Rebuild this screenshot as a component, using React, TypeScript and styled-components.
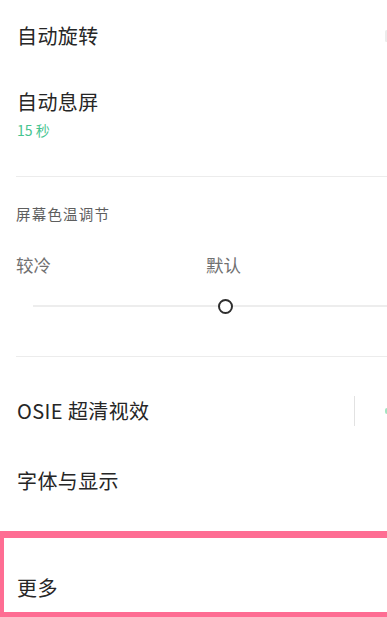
import React from "react";
import styled, { createGlobalStyle } from "styled-components";

const Global = createGlobalStyle`
  html, body { margin: 0; padding: 0; background: #ffffff; overflow: hidden; }
  body { font-family: "Noto Sans CJK SC", "Noto Sans", sans-serif; -webkit-font-smoothing: antialiased; }
  * { box-sizing: border-box; }
`;

const Page = styled.div`
  width: 387px;
  height: 617px;
  display: flex;
  flex-direction: column;
  background: #fff;
  overflow: hidden;
`;

const Row = styled.div<{ $h: number }>`
  height: ${(p) => p.$h}px;
  display: flex;
  align-items: center;
  justify-content: space-between;
  padding-left: 17px;
  position: relative;
`;

const Title = styled.div`
  font-size: 20px;
  line-height: 24px;
  color: #262626;
  letter-spacing: 0.4px;
`;

const TwoLine = styled.div`
  display: flex;
  flex-direction: column;
  gap: 6px;
  padding: 18px 0 36px 17px;
`;

const Sub = styled.div`
  font-size: 14px;
  line-height: 20px;
  color: #46c490;
`;

const Divider = styled.div`
  height: 1px;
  margin-left: 16px;
  background: #ececec;
`;

const SectionHeader = styled.div`
  padding: 28px 0 0 16px;
  font-size: 14.5px;
  line-height: 18px;
  color: #5e5e5e;
  letter-spacing: 1.2px;
`;

const Labels = styled.div`
  margin-top: 30px;
  display: grid;
  grid-template-columns: 190px auto;
  padding-left: 16px;
  font-size: 17.5px;
  line-height: 24px;
  color: #707070;
`;

const SliderWrap = styled.div`
  margin-top: 19px;
  height: 20px;
  margin-left: 33px;
  position: relative;
  display: flex;
  align-items: center;
`;

const Track = styled.div`
  flex: 1;
  height: 2px;
  background: #ededed;
`;

const Knob = styled.div`
  position: absolute;
  left: 185px;
  top: 3px;
  width: 15px;
  height: 15px;
  border-radius: 50%;
  border: 2.5px solid #2e2e2e;
  background: #fff;
`;

const Spacer = styled.div<{ $h: number }>`
  height: ${(p) => p.$h}px;
  flex-shrink: 0;
`;

const RightTools = styled.div`
  display: flex;
  align-items: center;
  height: 100%;
  gap: 30px;
  margin-right: -2px;
`;

const VLine = styled.div`
  width: 1px;
  height: 30px;
  background: #e2e2e2;
`;

const GreenStub = styled.div`
  width: 4px;
  height: 6px;
  border-radius: 2px;
  background: #7fd9a8;
  opacity: 0.7;
`;

const GrayStub = styled.div`
  width: 3px;
  height: 12px;
  border-radius: 2px;
  background: #ececec;
  margin-right: -1px;
`;

const Highlight = styled.div`
  flex: 1;
  border-top: 7px solid #fe6d93;
  border-left: 4px solid #fe6d93;
  border-bottom: 5px solid #fe6d93;
  display: flex;
  align-items: flex-end;
  padding: 0 0 12px 13px;
`;

export default function App() {
  return (
    <Page>
      <Global />
      <Row $h={72}>
        <Title>自动旋转</Title>
        <GrayStub />
      </Row>
      <TwoLine>
        <Title>自动息屏</Title>
        <Sub>15 秒</Sub>
      </TwoLine>
      <Divider />
      <SectionHeader>屏幕色温调节</SectionHeader>
      <Labels>
        <span>较冷</span>
        <span>默认</span>
      </Labels>
      <SliderWrap>
        <Track />
        <Knob />
      </SliderWrap>
      <Spacer $h={40} />
      <Divider />
      <Spacer $h={19} />
      <Row $h={70}>
        <Title>OSIE 超清视效</Title>
        <RightTools>
          <VLine />
          <GreenStub />
        </RightTools>
      </Row>
      <Row $h={70}>
        <Title>字体与显示</Title>
      </Row>
      <Spacer $h={15} />
      <Highlight>
        <Title>更多</Title>
      </Highlight>
    </Page>
  );
}
